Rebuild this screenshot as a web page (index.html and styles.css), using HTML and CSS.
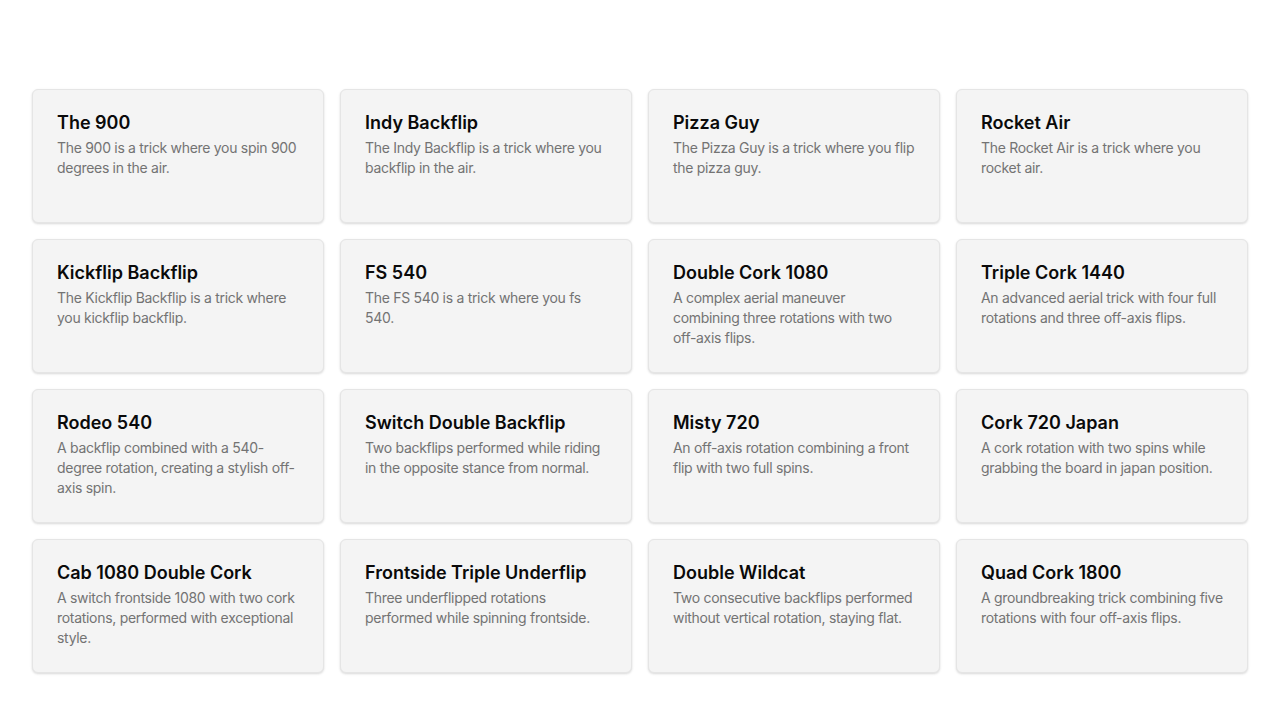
FILE: index.html
```html
<!DOCTYPE html>
<html lang="en">

<head>
    <meta charset="UTF-8">
    <meta name="viewport" content="width=device-width, initial-scale=1.0">
    <title>Tricks</title>

    <link rel="stylesheet" href="styles.css">

</head>

<body>

    <section class="tricks">

        <div class="card">
            <h3>The 900</h3>
            <p>The 900 is a trick where you spin 900 degrees in the air.</p>
        </div>

        <div class="card">
            <h3>Indy Backflip</h3>
            <p>The Indy Backflip is a trick where you backflip in the air.</p>
        </div>

        <div class="card">
            <h3>Pizza Guy</h3>
            <p>The Pizza Guy is a trick where you flip the pizza guy.</p>
        </div>

        <div class="card">
            <h3>Rocket Air</h3>
            <p>The Rocket Air is a trick where you rocket air.</p>
        </div>

        <div class="card">
            <h3>Kickflip Backflip</h3>
            <p>The Kickflip Backflip is a trick where you kickflip backflip.</p>
        </div>

        <div class="card">
            <h3>FS 540</h3>
            <p>The FS 540 is a trick where you fs 540.</p>
        </div>

        <div class="card">
            <h3>Double Cork 1080</h3>
            <p>A complex aerial maneuver combining three rotations with two off-axis flips.</p>
        </div>

        <div class="card">
            <h3>Triple Cork 1440</h3>
            <p>An advanced aerial trick with four full rotations and three off-axis flips.</p>
        </div>

        <div class="card">
            <h3>Rodeo 540</h3>
            <p>A backflip combined with a 540-degree rotation, creating a stylish off-axis spin.</p>
        </div>

        <div class="card">
            <h3>Switch Double Backflip</h3>
            <p>Two backflips performed while riding in the opposite stance from normal.</p>
        </div>

        <div class="card">
            <h3>Misty 720</h3>
            <p>An off-axis rotation combining a front flip with two full spins.</p>
        </div>

        <div class="card">
            <h3>Cork 720 Japan</h3>
            <p>A cork rotation with two spins while grabbing the board in japan position.</p>
        </div>

        <div class="card">
            <h3>Cab 1080 Double Cork</h3>
            <p>A switch frontside 1080 with two cork rotations, performed with exceptional style.</p>
        </div>

        <div class="card">
            <h3>Frontside Triple Underflip</h3>
            <p>Three underflipped rotations performed while spinning frontside.</p>
        </div>

        <div class="card">
            <h3>Double Wildcat</h3>
            <p>Two consecutive backflips performed without vertical rotation, staying flat.</p>
        </div>

        <div class="card">
            <h3>Quad Cork 1800</h3>
            <p>A groundbreaking trick combining five rotations with four off-axis flips.</p>
        </div>

    </section>

</body>

</html>
```

FILE: styles.css
```css
body {
    margin: 0;
    background-color: #ffffff;
    font-family: Inter, "Noto Sans", sans-serif;
}

.tricks {
    display: grid;
    grid-template-columns: repeat(4, 1fr);
    gap: 16px;
    padding: 89px 32px 40px 32px;
}

.card {
    min-height: 134px;
    box-sizing: border-box;
    padding: 21px 24px 23px 24px;
    background-color: #f4f4f4;
    border: 1px solid #e5e5e5;
    border-radius: 6px;
    box-shadow: 0 1px 3px rgba(0, 0, 0, 0.1), 0 1px 2px rgba(0, 0, 0, 0.06);
}

.card h3 {
    margin: 0 0 3px 0;
    font-size: 18px;
    line-height: 24px;
    font-weight: 600;
    color: #0a0a0a;
}

.card p {
    margin: 0;
    font-size: 14px;
    line-height: 20px;
    color: #737373;
    letter-spacing: -0.3px;
}
```
